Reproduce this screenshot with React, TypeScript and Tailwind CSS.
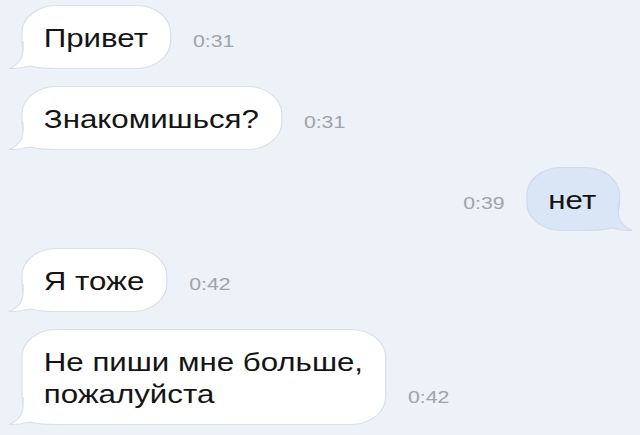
type Message = {
  id: number;
  lines: string[];
  time: string;
  out?: boolean;
};

const messages: Message[] = [
  { id: 1, lines: ['Привет'], time: '0:31' },
  { id: 2, lines: ['Знакомишься?'], time: '0:31' },
  { id: 3, lines: ['нет'], time: '0:39', out: true },
  { id: 4, lines: ['Я тоже'], time: '0:42' },
  { id: 5, lines: ['Не пиши мне больше,', 'пожалуйста'], time: '0:42' },
];

function Tail({ out }: { out?: boolean }) {
  const fill = out ? '#dae5f5' : '#ffffff';
  const stroke = out ? '#cfdbeb' : '#dbe0e8';
  return (
    <svg
      width="39"
      height="28"
      viewBox="0 0 39 28"
      className={
        out
          ? 'absolute -right-[11px] -bottom-[1px] -scale-x-100'
          : 'absolute -left-[11px] -bottom-[1px]'
      }
      aria-hidden="true"
    >
      <path
        d="M11.5 0 L11.5 8 C11.5 18 7 24 0.5 27.5 C6 27.8 12 26.5 17 25 C22 27 28 27.5 39 27.5 L39 0 Z"
        fill={fill}
      />
      <path
        d="M11.5 0 L11.5 8 C11.5 18 7 24 0.5 27.5 C6 27.8 12 26.5 17 25 C22 27 28 27.5 39 27.5"
        fill="none"
        stroke={stroke}
        strokeWidth="1"
      />
    </svg>
  );
}

function Bubble({ msg }: { msg: Message }) {
  return (
    <div
      className={[
        'relative rounded-[28px] border pl-[17px] pr-[18px] pt-[16px] pb-[14px] text-[25px] leading-[32px] text-[#141414]',
        msg.out ? 'bg-[#dae5f5] border-[#cfdbeb]' : 'bg-white border-[#dbe0e8]',
      ].join(' ')}
    >
      <Tail out={msg.out} />
      <div className="relative z-10">
        {msg.lines.map((line, i) => (
          <div key={i} className="whitespace-nowrap">
            {line}
          </div>
        ))}
      </div>
    </div>
  );
}

function Time({ value }: { value: string }) {
  return <span className="text-[17px] leading-[20px] text-[#9ea4ac]">{value}</span>;
}

export default function App() {
  return (
    <div className="w-[640px] h-[435px] overflow-hidden bg-[#edf1f8] font-['Liberation_Sans',Arial,sans-serif]">
      <div className="w-[512px] origin-top-left scale-x-125 px-4 pt-[5px] flex flex-col gap-[17px]">
        {messages.map((msg) => (
          <div
            key={msg.id}
            className={[
              'flex items-baseline-last gap-[17px]',
              msg.out ? 'justify-end' : 'justify-start pl-[1px]',
            ].join(' ')}
          >
            {msg.out ? <Time value={msg.time} /> : null}
            <Bubble msg={msg} />
            {msg.out ? null : <Time value={msg.time} />}
          </div>
        ))}
      </div>
    </div>
  );
}
